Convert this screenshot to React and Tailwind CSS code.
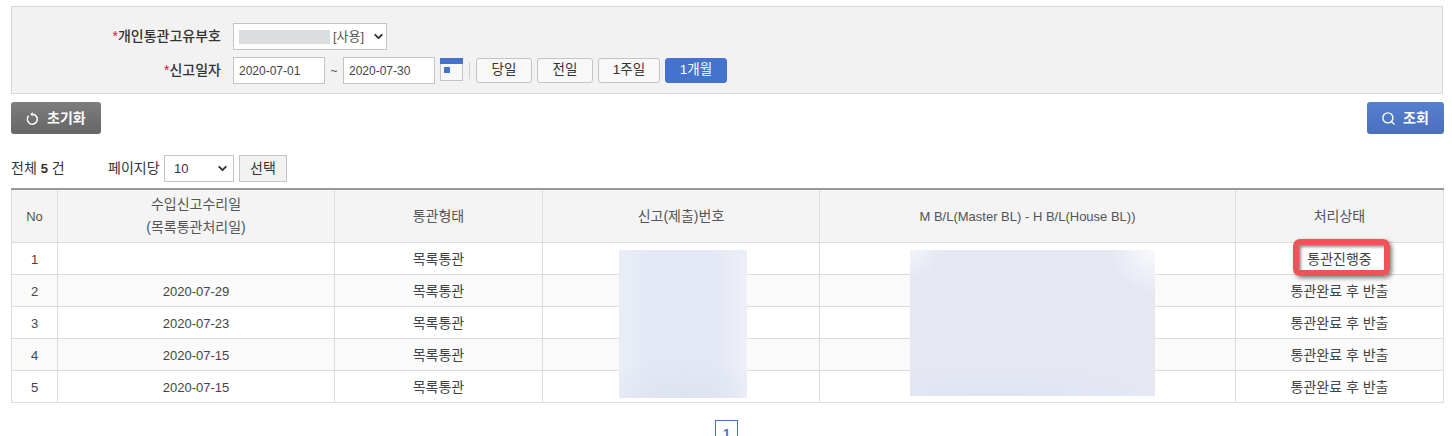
import React from "react";
import { Search, ChevronDown } from "lucide-react";

const font = { fontFamily: '"Liberation Sans","Noto Sans CJK KR",sans-serif' };

const rows = [
  ["1", "", "목록통관", "통관진행중"],
  ["2", "2020-07-29", "목록통관", "통관완료 후 반출"],
  ["3", "2020-07-23", "목록통관", "통관완료 후 반출"],
  ["4", "2020-07-15", "목록통관", "통관완료 후 반출"],
  ["5", "2020-07-15", "목록통관", "통관완료 후 반출"],
];

function RangeBtn({ children, active, w }) {
  return (
    <button
      className={`h-[25px] rounded-[3px] border text-[13.5px] ${w} ${
        active ? "border-[#4472cd] bg-[#4472cd] text-white" : "border-[#c4c4c4] bg-[#f8f8f8] text-[#333]"
      }`}
    >
      {children}
    </button>
  );
}

function Th({ children, className = "" }) {
  return <th className={`border border-[#dcdcdc] bg-[#f4f4f4] pt-[1px] text-[14px] leading-[23px] font-normal text-[#555] ${className}`}>{children}</th>;
}
function Td({ children, latin }) {
  return <td className={`h-[32px] border border-[#dcdcdc] p-0 pt-[3px] text-center text-[#444] ${latin ? "text-[13px]" : "text-[14px]"}`}>{children}</td>;
}

export default function App() {
  return (
    <div className="relative h-[436px] w-[1452px] overflow-hidden bg-white" style={font}>
      <div className="pl-[11px] pr-[9px] pt-[6px]">
        {/* search panel */}
        <div className="flex h-[88px] flex-col gap-[7px] border border-[#d6d6d6] bg-[#f2f2f2] pt-[16px]">
          <div className="flex items-center">
            <div className="w-[221px] pr-[12px] text-right text-[14px] font-medium text-[#333]">
              <span className="text-[#e0103a]">*</span>개인통관고유부호
            </div>
            <div className="flex h-[27px] w-[154px] items-center border border-[#c4c4c4] bg-white pl-[5px]">
              <span className="h-[14px] w-[91px] bg-[#dcdddf]" />
              <span className="ml-[3px] text-[13px] text-[#555]">[사용]</span>
              <ChevronDown size={13} strokeWidth={3.5} className="ml-[8px] text-[#333]" />
            </div>
          </div>
          <div className="flex items-center">
            <div className="w-[221px] pr-[12px] text-right text-[14px] font-medium text-[#333]">
              <span className="text-[#e0103a]">*</span>신고일자
            </div>
            <div className="flex h-[27px] w-[92px] items-center border border-[#c4c4c4] bg-white pl-[5px] text-[12px] text-[#444]">2020-07-01</div>
            <span className="w-[18px] text-center text-[12px] text-[#555]">~</span>
            <div className="flex h-[27px] w-[92px] items-center border border-[#c4c4c4] bg-white pl-[5px] text-[12px] text-[#444]">2020-07-30</div>
            <div className="relative ml-[5px] mb-[2px] h-[23px] w-[23px] border border-[#c4c4c4] bg-[#f7f7f7]">
              <div className="absolute inset-x-[-1px] top-[-1px] h-[6px] bg-[#4472cd]" />
              <div className="absolute left-[3px] top-[8px] h-[6px] w-[6px] bg-[#4472cd]" />
            </div>
            <div className="mx-[6px] h-[17px] w-px bg-[#d0d0d0]" />
            <div className="flex gap-[5px]">
              <RangeBtn w="w-[56px]">당일</RangeBtn>
              <RangeBtn w="w-[56px]">전일</RangeBtn>
              <RangeBtn w="w-[62px]">1주일</RangeBtn>
              <RangeBtn w="w-[62px]" active>1개월</RangeBtn>
            </div>
          </div>
        </div>

        {/* action bar */}
        <div className="mt-[8px] flex justify-between">
          <button className="flex h-[32px] w-[90px] items-center rounded-[3px] bg-gradient-to-b from-[#7d7d7d] to-[#666] pl-[15px] text-[14px] font-bold text-white">
            <svg width="13" height="15" viewBox="0 0 13 15" fill="none" stroke="white" strokeWidth="1.5">
              <path d="M2.6 4.8 A5 5 0 1 0 6.4 3.2" />
              <path d="M6.6 0.9 L4.4 3.2 L6.6 5.5 Z" fill="white" stroke="none" />
            </svg>
            <span className="ml-[8px]">초기화</span>
          </button>
          <button className="mr-[-1px] flex h-[32px] w-[77px] items-center rounded-[3px] bg-gradient-to-b from-[#5580d0] to-[#4a6fbd] pl-[14px] text-[14px] font-bold text-white">
            <Search size={15} strokeWidth={2.2} />
            <span className="ml-[7px]">조회</span>
          </button>
        </div>

        {/* list controls */}
        <div className="mt-[21px] flex h-[27px] items-center text-[14px] text-[#333]">
          <span className="w-[97px]">전체 <b className="text-[13px] font-bold">5</b> 건</span>
          <span className="w-[56px]">페이지당</span>
          <div className="flex h-[27px] w-[70px] items-center justify-between border border-[#c4c4c4] bg-white pl-[9px] pr-[4px] text-[13px]">
            10
            <ChevronDown size={13} strokeWidth={3.5} className="text-[#333]" />
          </div>
          <button className="ml-[5px] h-[27px] w-[48px] border border-[#c4c4c4] bg-[#f2f2f2] text-[14px] text-[#333]">선택</button>
        </div>

        {/* table */}
        <table className="mt-[6px] w-[1432px] table-fixed border-collapse border-t-2 border-t-[#999]">
          <colgroup>
            <col className="w-[46px]" />
            <col className="w-[277px]" />
            <col className="w-[208px]" />
            <col className="w-[277px]" />
            <col className="w-[416px]" />
            <col className="w-[208px]" />
          </colgroup>
          <thead>
            <tr className="h-[53px]">
              <Th className="!text-[13px]">No</Th>
              <Th>수입신고수리일<br />(목록통관처리일)</Th>
              <Th>통관형태</Th>
              <Th>신고(제출)번호</Th>
              <Th className="!text-[13px]">M B/L(Master BL) - H B/L(House BL))</Th>
              <Th>처리상태</Th>
            </tr>
          </thead>
          <tbody>
            {rows.map((r, i) => (
              <tr key={r[0]} className={i === 1 || i === 3 ? "bg-[#fafafa]" : "bg-white"}>
                <Td latin>{r[0]}</Td>
                <Td latin>{r[1]}</Td>
                <Td>{r[2]}</Td>
                <Td></Td>
                <Td></Td>
                <Td>{r[3]}</Td>
              </tr>
            ))}
          </tbody>
        </table>

        {/* pagination */}
        <div className="mt-[17px] flex justify-center pr-[1px]">
          <div className="flex h-[26px] w-[23px] items-center justify-center border-[1.5px] border-[#4472cd] pt-[2px] text-[13px] font-bold text-[#4472cd]">1</div>
        </div>
      </div>

      {/* redactions over the table */}
      <div className="absolute left-[619px] top-[250px] h-[148px] w-[128px] bg-[radial-gradient(ellipse_70%_25%_at_50%_100%,#dde2f1,transparent),linear-gradient(to_right,#e9edf7,#e4e8f4_25%,#e4e8f4_75%,#edf0f8)]" />
      <div className="absolute left-[910px] top-[250px] h-[146px] w-[245px] bg-[radial-gradient(circle_45px_at_100%_0%,#f9fafc,#f9fafc00),radial-gradient(circle_30px_at_0%_0%,#f3f4f9,#f3f4f900),radial-gradient(ellipse_60%_20%_at_35%_100%,#dfe4f2,#dfe4f200),linear-gradient(#e5e8f3,#e5e8f3)]" />
      {/* annotation */}
      <div className="absolute left-[1293px] top-[239px] h-[37px] w-[97px] rounded-[7px] border-[6px] border-[#ec5558] shadow-[2px_2px_4px_rgba(0,0,0,0.5),inset_2px_2px_3px_rgba(0,0,0,0.45)]" />
    </div>
  );
}
